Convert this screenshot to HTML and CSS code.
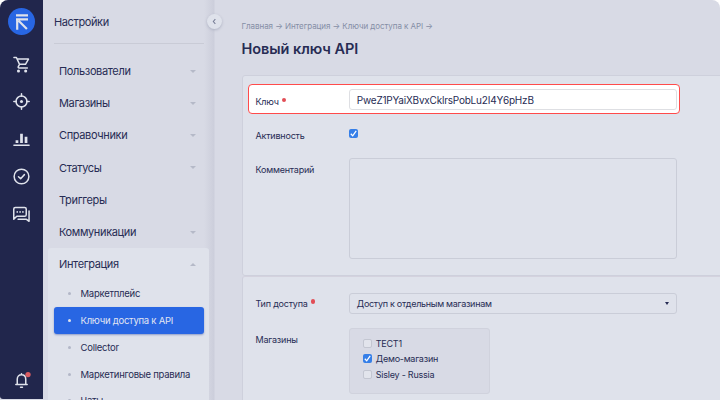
FILE: index.html
```html
<!DOCTYPE html>
<html lang="ru">
<head>
<meta charset="utf-8">
<title>Новый ключ API</title>
<link rel="stylesheet" href="styles.css">
</head>
<body>
<div class="app">
  <nav class="rail">
    <svg class="logo" viewBox="0 0 27 27"><circle cx="13.5" cy="13.5" r="13.5" fill="#2866e3"/><g fill="none" stroke="#dfe2eb" stroke-width="2.2"><path d="M8 7.3h12M8 11.4h12M9.2 11v10.8M10.6 12.8l8.3 8.2"/></g></svg>
    <svg class="icon" viewBox="0 0 18 18"><path d="M1 1.6h2.6l3.3 7.2h6.3l3.2-5.5H4.5M6.9 8.8l-1.3 2.5c-.4.8.1 1.4.9 1.4h8.7"/><g fill="#dfe2eb" stroke="none"><circle cx="5.8" cy="15.9" r="1.6"/><circle cx="13.4" cy="15.9" r="1.6"/></g></svg>
    <svg class="icon" viewBox="0 0 18 18"><circle cx="9" cy="9" r="5.8"/><path d="M9 .9v2.6M9 14.5v2.6M.9 9h2.6M14.5 9h2.6"/><circle cx="9" cy="9" r="1.6" fill="#dfe2eb" stroke="none"/></svg>
    <svg class="icon" viewBox="0 0 18 18"><path d="M1 15h16"/><path stroke-width="2.9" stroke-linecap="butt" d="M4.2 12.7V9.8M9 12.7V3M13.8 12.7V6"/></svg>
    <svg class="icon" viewBox="0 0 18 18"><circle cx="9" cy="9" r="7.8"/><path d="M5.8 9.2l2.3 2.1 4-4.3"/></svg>
    <svg class="icon" viewBox="0 0 18 18"><path d="M.8 14V3.2C.8 2.2 1.5 1.5 2.5 1.5h9.8c1 0 1.7.7 1.7 1.7v6c0 1-.7 1.7-1.7 1.7H4zM17 5.2v11l-2.7-2.1H5.4"/><g fill="#dfe2eb" stroke="none"><circle cx="4.5" cy="6.3" r=".9"/><circle cx="7.5" cy="6.3" r=".9"/><circle cx="10.5" cy="6.3" r=".9"/></g></svg>
    <svg class="icon bell" viewBox="0 0 18 18"><path d="M3 13.3h12M4.5 13V7.8C4.5 4.8 6.3 3 9 3s4.5 1.8 4.5 4.8V13M9 2.8V1.9M8 16.1h2"/><circle cx="15.9" cy="2.7" r="2.8" fill="#db5c62" stroke="none"/></svg>
  </nav>

  <aside class="sidebar">
    <h2 class="side-title"><span>Настройки</span></h2>
    <ul class="menu">
      <li class="row has-sub"><span>Пользователи</span></li>
      <li class="row has-sub"><span>Магазины</span></li>
      <li class="row has-sub"><span>Справочники</span></li>
      <li class="row has-sub"><span>Статусы</span></li>
      <li class="row"><span>Триггеры</span></li>
      <li class="row has-sub"><span>Коммуникации</span></li>
    </ul>
    <div class="group">
      <div class="row has-sub open"><span>Интеграция</span></div>
      <ul class="submenu">
        <li><span>Маркетплейс</span></li>
        <li class="active"><span>Ключи доступа к API</span></li>
        <li><span>Collector</span></li>
        <li><span>Маркетинговые правила</span></li>
        <li><span>Чаты</span></li>
      </ul>
    </div>
    <button class="collapse" aria-label="Свернуть"><svg viewBox="0 0 16 16"><path d="M8.9 5.4L6.7 8l2.2 2.6"/></svg></button>
  </aside>

  <main class="content">
    <div class="crumbs"><span>Главная → Интеграция → Ключи доступа к API →</span></div>
    <h1><span>Новый ключ API</span></h1>
    <form class="form">
      <section class="card first">
        <div class="highlight">
          <label class="label">Ключ<i class="req"></i></label>
          <div class="field key"><span>PweZ1PYaiXBvxCklrsPobLu2I4Y6pHzB</span></div>
        </div>
        <div class="line activity">
          <label class="label">Активность</label>
          <span class="check on"><svg viewBox="0 0 8 8"><path d="M1.6 4.2l1.7 1.9 3.1-4.4"/></svg></span>
        </div>
        <div class="line comment">
          <label class="label">Комментарий</label>
          <div class="field area"></div>
        </div>
      </section>
      <section class="card second">
        <div class="line type">
          <label class="label">Тип доступа<i class="req"></i></label>
          <div class="field select"><span>Доступ к отдельным магазинам</span></div>
        </div>
        <div class="line shops">
          <label class="label">Магазины</label>
          <div class="shop-list">
            <div class="shop"><span class="check"></span><span>ТЕСТ1</span></div>
            <div class="shop"><span class="check on"><svg viewBox="0 0 8 8"><path d="M1.6 4.2l1.7 1.9 3.1-4.4"/></svg></span><span>Демо-магазин</span></div>
            <div class="shop"><span class="check"></span><span>Sisley - Russia</span></div>
          </div>
        </div>
      </section>
    </form>
  </main>
</div>
</body>
</html>
```
FILE: styles.css
```css
* { box-sizing: border-box; }
body { margin: 0; background: #fff; font-family: Inter, "Liberation Sans", sans-serif; color: #272c54; overflow: hidden; }
ul, h1, h2 { margin: 0; padding: 0; list-style: none; font-weight: 400; }
.app { display: flex; width: 720px; height: 400px; background: #d8dae5; border-radius: 8px 8px 0 0; overflow: hidden; }

.rail { width: 43px; height: 399px; flex: none; background: #21264c; border-bottom-left-radius: 3px; display: flex; flex-direction: column; align-items: center; padding: 8px 0 10px; }
.logo { width: 27px; height: 27px; margin-bottom: 20.5px; }
.icon { width: 17px; height: 17px; flex: none; margin-bottom: 20.5px; fill: none; stroke: #dfe2eb; stroke-width: 1.6; stroke-linejoin: round; stroke-linecap: round; overflow: visible; }
.bell { margin: auto 0 0; }

.sidebar { position: relative; width: 172px; flex: none; background: linear-gradient(to right, #d8dae5 161px, #d1d3df 167px, #cccedb 171px, #d8dae5 172px); }
.side-title { height: 44px; margin: 0 8px 0 11px; width: 150px; border-bottom: 1px solid #c9cbd6; font-size: 11px; line-height: 44px; letter-spacing: -0.38px; }
.menu { padding-top: 11px; }
.row { display: flex; align-items: center; justify-content: space-between; height: 32.2px; padding: 0 17px 0 16px; width: 171px; font-size: 11px; letter-spacing: -0.36px; }
.has-sub::after { content: ""; border: 3px solid transparent; border-top-color: #b5b9c8; border-bottom: 0; margin-right: 1px; }
.has-sub.open::after { border-top: 0; border-bottom: 3px solid #b5b9c8; }
.group { margin-left: 5px; width: 161px; height: 153px; background: #dfe2eb; border-radius: 3px 3px 0 0; overflow: hidden; }
.group .row { padding: 0 12px 0 11px; width: 161px; }
.submenu li { display: flex; align-items: center; height: 26.8px; margin: 0 5px 0 5.5px; font-size: 9.5px; letter-spacing: -0.25px; border-radius: 3px; }
.submenu li::before { content: ""; width: 3px; height: 3px; border-radius: 50%; background: #b3b7c7; margin: 0 10px 0 14px; }
.submenu .active { background: #2866e3; color: #e1e5f2; box-shadow: 0 1px 2px #8e9cc8; }
.submenu .active::before { background: #dfe2eb; }
.collapse { position: absolute; left: 164px; top: 14px; width: 15px; height: 15px; padding: 0; border: 0; border-radius: 50%; background: #dfe2eb; box-shadow: 0 1px 3px #aeb2c3; }
.collapse svg { display: block; width: 15px; height: 15px; fill: none; stroke: #777d96; stroke-width: 1.1; }

.content { flex: 1; min-width: 0; padding: 19px 0 0 26.5px; }
.crumbs { height: 14px; font-size: 8px; line-height: 14px; color: #858ea5; white-space: nowrap; letter-spacing: -0.06px; }
h1 { height: 22px; margin-top: 5px; font-size: 14.5px; line-height: 21px; font-weight: 600; white-space: nowrap; letter-spacing: -0.05px; }
.form { margin-top: 15px; width: 490px; }
.card { background: #dfe2eb; border: 1px solid #ced0dc; border-radius: 3px; }
.first { height: 200.5px; padding: 8px 0 0 5px; }
.second { height: 140px; padding: 16px 0 0 13px; border-top-color: #d4d2de; }
.highlight { display: flex; width: 432px; height: 30px; padding: 5px 0 0 7px; border: 1px solid #ff4b4b; border-radius: 4px; background: #fff; }
.label { width: 93.3px; flex: none; font-size: 9px; line-height: 23px; white-space: nowrap; letter-spacing: -0.2px; }
.req { display: inline-block; width: 4.5px; height: 4.5px; margin-left: 3px; border-radius: 50%; background: #e24d56; vertical-align: 3px; }
.field { width: 328px; height: 20px; border: 1px solid #cacdd8; border-radius: 3px; padding-left: 7px; font-size: 9px; line-height: 20px; white-space: nowrap; letter-spacing: -0.28px; }
.key { border-color: #dedfe3; font-size: 10px; letter-spacing: -0.21px; }
.highlight .field { height: 21px; margin-top: -1px; }
.line { display: flex; }
.first .line { padding-left: 8px; }
.activity { margin-top: 10px; height: 34px; }
.area { height: 101px; }
.check { display: block; width: 9px; height: 9px; border: 1px solid #c3c6d1; border-radius: 2px; background: #e2e4ec; }
.check.on { border: 0; background: #367fe8; }
.check svg { display: block; width: 9px; height: 9px; fill: none; stroke: #fff; stroke-width: 1.1; }
.activity .check { margin-top: 4.5px; }
.select { display: flex; justify-content: space-between; padding-right: 7px; height: 21px; }
.select::after { content: ""; margin-top: 8px; border: 2px solid transparent; border-top: 3px solid #272c54; border-bottom: 0; height: 0; }
.type .label { line-height: 22px; }
.shops { margin-top: 13px; }
.shop-list { width: 141px; height: 66px; padding: 7px 0 0 13px; background: #d8dae5; border: 1px solid #d0d2dd; border-radius: 3px; }
.shop { display: flex; align-items: center; gap: 4px; height: 15.5px; font-size: 9px; letter-spacing: -0.24px; }
```
